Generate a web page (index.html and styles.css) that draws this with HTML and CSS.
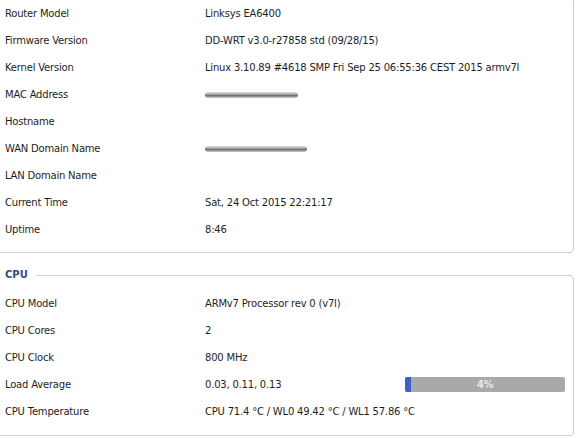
FILE: index.html
```html
<!DOCTYPE html>
<html>
<head>
<meta charset="utf-8">
<link rel="stylesheet" href="styles.css">
</head>
<body>
<div class="panel">
  <div class="row"><span class="label">Router Model</span><span class="value">Linksys EA6400</span></div>
  <div class="row"><span class="label">Firmware Version</span><span class="value">DD-WRT v3.0-r27858 std (09/28/15)</span></div>
  <div class="row"><span class="label">Kernel Version</span><span class="value wide">Linux 3.10.89 #4618 SMP Fri Sep 25 06:55:36 CEST 2015 armv7l</span></div>
  <div class="row"><span class="label">MAC Address</span><span class="value"><span class="blur blur-mac"></span></span></div>
  <div class="row"><span class="label">Hostname</span><span class="value"></span></div>
  <div class="row"><span class="label">WAN Domain Name</span><span class="value"><span class="blur blur-wan"></span></span></div>
  <div class="row"><span class="label">LAN Domain Name</span><span class="value"></span></div>
  <div class="row"><span class="label">Current Time</span><span class="value">Sat, 24 Oct 2015 22:21:17</span></div>
  <div class="row"><span class="label">Uptime</span><span class="value">8:46</span></div>
</div>
<fieldset class="group">
  <legend class="group-title">CPU</legend>
  <div class="row"><span class="label">CPU Model</span><span class="value">ARMv7 Processor rev 0 (v7l)</span></div>
  <div class="row"><span class="label">CPU Cores</span><span class="value">2</span></div>
  <div class="row"><span class="label">CPU Clock</span><span class="value">800 MHz</span></div>
  <div class="row"><span class="label">Load Average</span><span class="value">0.03, 0.11, 0.13</span>
    <span class="meter"><span class="meter-fill" style="width:4%"></span><span class="meter-text">4%</span></span></div>
  <div class="row"><span class="label">CPU Temperature</span><span class="value wide">CPU 71.4 °C / WL0 49.42 °C / WL1 57.86 °C</span></div>
</fieldset>
</body>
</html>
```
FILE: styles.css
```css
html, body {
  margin: 0;
  padding: 0;
  background: #fff;
}
body {
  font-family: "DejaVu Sans", Verdana, sans-serif;
  font-size: 10px;
  letter-spacing: -0.2px;
  color: #1e1e1e;
  overflow: hidden;
}
.panel {
  margin: -2px 2px 0 -10px;
  border: 1px solid #cfcfcf;
  border-radius: 4px;
  padding: 1px 0 9px 9px;
}
.row {
  display: grid;
  grid-template-columns: 200px 200px 160px;
  align-items: center;
  height: 27px;
  padding-left: 5px;
}
.value.wide {
  grid-column: 2 / 4;
  white-space: nowrap;
}
.blur {
  display: block;
  height: 6px;
  border-radius: 3px;
  background: linear-gradient(to bottom, #e2e2e2, #9a9a9a 45%, #6e6e6e 60%, #d0d0d0);
  filter: blur(0.7px);
}
.blur-mac { width: 93px; }
.blur-wan { width: 102px; }
.group {
  margin: 16px 2px 0 -10px;
  border: 1px solid #cfcfcf;
  border-radius: 4px;
  padding: 9px 0 10px 9px;
  min-width: 0;
}
.group-title {
  padding: 0 8px 0 5px;
  font-weight: bold;
  font-size: 10px;
  line-height: 12px;
  letter-spacing: 0;
  color: #2f4c8c;
}
.meter {
  position: relative;
  display: block;
  height: 15px;
  background: #a9a9a9;
  border-radius: 2px;
  overflow: hidden;
}
.meter-fill {
  display: block;
  height: 100%;
  background: #3b62c4;
}
.meter-text {
  position: absolute;
  inset: 0;
  text-align: center;
  line-height: 15px;
  color: #e8e8e8;
  font-weight: bold;
  font-size: 10px;
}
```
